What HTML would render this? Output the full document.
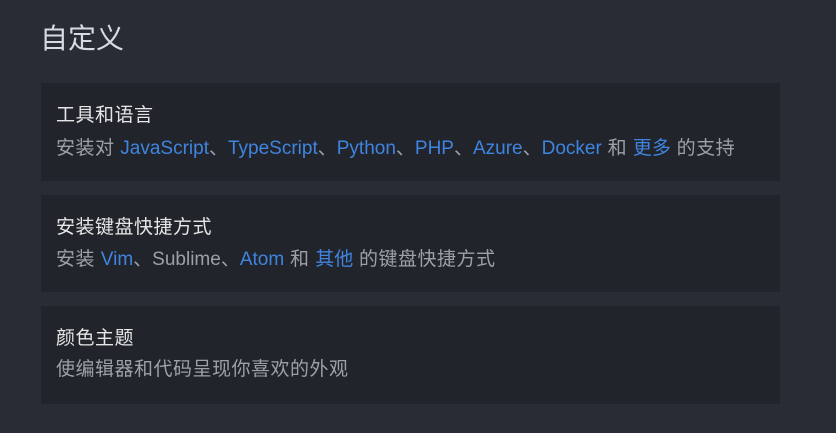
<!DOCTYPE html>
<html><head><meta charset="utf-8"><style>
html,body{margin:0;padding:0;width:836px;height:433px;background:#282c34;overflow:hidden;font-family:"Liberation Sans","Noto Sans CJK SC",sans-serif;}
h1{position:absolute;left:40px;top:19px;margin:0;font-weight:400;font-size:28px;color:#d7dae0;line-height:40px;}
.card{position:absolute;left:41px;width:739px;background:#21252b;}
.t{position:absolute;left:15px;top:21px;font-size:19px;color:#e6e6e6;line-height:24px;white-space:nowrap;letter-spacing:0.5px;}
.d{position:absolute;left:15px;top:52px;font-size:19px;color:#9da0a6;line-height:24px;white-space:nowrap;letter-spacing:0.5px;}
a,.l{color:#3f84e0;text-decoration:none;letter-spacing:0;font-size:19px;}
.l{color:#9da0a6}
i{font-style:normal;display:inline-block;width:19px;font-family:"Noto Sans CJK SC",sans-serif;}
</style></head><body>
<h1>自定义</h1>
<div class="card" style="top:83px;height:98px"><div class="t">工具和语言</div><div class="d">安装对 <a>JavaScript</a><i>、</i><a>TypeScript</a><i>、</i><a>Python</a><i>、</i><a>PHP</a><i>、</i><a>Azure</a><i>、</i><a>Docker</a> 和 <a>更多</a> 的支持</div></div>
<div class="card" style="top:195px;height:97px"><div class="t">安装键盘快捷方式</div><div class="d" style="top:51px">安装 <a>Vim</a><i>、</i><span class="l">Sublime</span><i>、</i><a>Atom</a> 和 <a>其他</a> 的键盘快捷方式</div></div>
<div class="card" style="top:306px;height:98px"><div class="t">颜色主题</div><div class="d">使编辑器和代码呈现你喜欢的外观</div></div>
</body></html>
